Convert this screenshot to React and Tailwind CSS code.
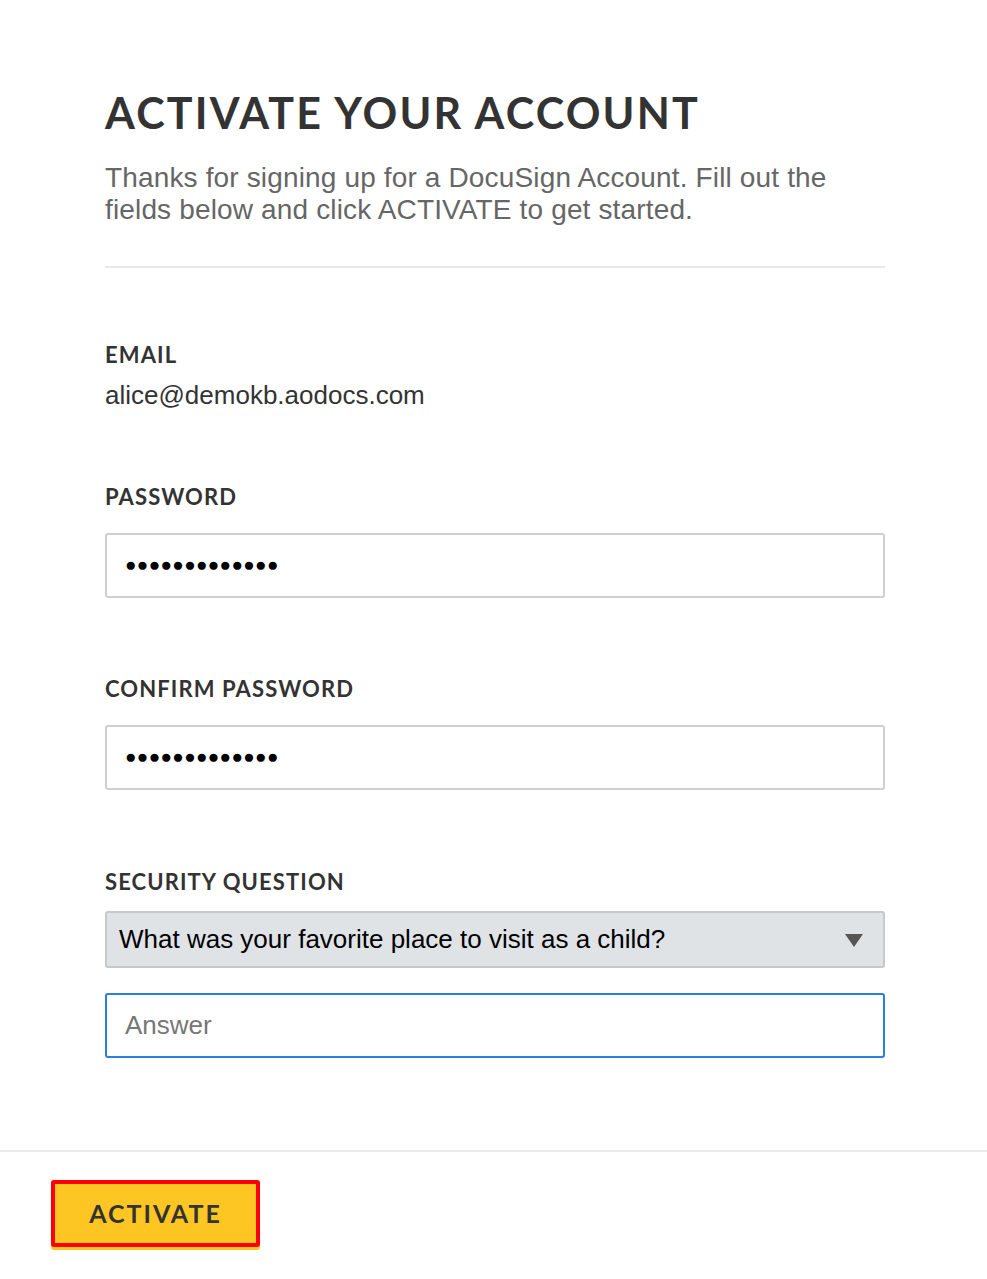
import { useState } from 'react'

const sans = { fontFamily: '"Liberation Sans", Arial, sans-serif' }

export default function App() {
  const [answer, setAnswer] = useState('')

  return (
    <div className="min-h-[1279px] w-[987px] bg-white flex flex-col" style={sans}>
      <div className="pl-[105px] pr-[102px] flex-1">
        <h1
          className="mt-[88px] text-[43px] leading-[50px] font-bold tracking-[2.2px] text-[#333]"
          style={{ fontFamily: 'Lato, "Open Sans", sans-serif' }}
        >
          ACTIVATE YOUR ACCOUNT
        </h1>
        <p className="mt-[24px] text-[28px] leading-[32px] tracking-[0.15px] text-[#666]">
          Thanks for signing up for a DocuSign Account. Fill out the fields below and click ACTIVATE to get started.
        </p>
        <div className="mt-[40px] h-[2px] bg-[#e8e8e8]" />

        <Label className="mt-[75px]">EMAIL</Label>
        <div className="mt-[13px] text-[26px] leading-[30px] text-[#333]">alice@demokb.aodocs.com</div>

        <Label className="mt-[75px]">PASSWORD</Label>
        <PasswordBox />

        <Label className="mt-[79px]">CONFIRM PASSWORD</Label>
        <PasswordBox />

        <Label className="mt-[80px]">SECURITY QUESTION</Label>
        <div className="mt-[17px] h-[57px] rounded-[3px] border-2 border-[#c6c8ca] bg-[#dfe3e6] flex items-center justify-between pl-[12px] pr-[20px]">
          <span className="text-[26px] text-black">What was your favorite place to visit as a child?</span>
          <svg width="18" height="14" viewBox="0 0 18 14">
            <path d="M0 1 L18 1 L9 14 Z" fill="#555" />
          </svg>
        </div>
        <input
          value={answer}
          onChange={(e) => setAnswer(e.target.value)}
          placeholder="Answer"
          className="mt-[25px] w-full h-[65px] rounded-[3px] border-2 border-[#2a7de1] px-[18px] text-[26px] text-black placeholder-[#777] outline-none"
        />
      </div>

      <div className="mt-[87px] h-[2px] bg-[#ebebeb]" />
      <div className="pl-[51px] pt-[28px] pb-[32px]">
        <button className="relative w-[209px] h-[67px] rounded-[3px] bg-[#fec622] shadow-[0_3px_0_#fec622] outline-4 -outline-offset-4 outline-[#ff0000] text-[25px] font-bold tracking-[2px] text-[#333]" style={{ fontFamily: 'Lato, sans-serif' }}>
          ACTIVATE
        </button>
      </div>
    </div>
  )
}

function Label({ className = '', children }) {
  return (
    <div
      className={`${className} text-[22px] leading-[24px] font-bold tracking-[1.1px] text-[#333]`}
      style={{ fontFamily: 'Lato, "Open Sans", sans-serif' }}
    >
      {children}
    </div>
  )
}

function PasswordBox() {
  return (
    <div className="mt-[24px] h-[65px] rounded-[3px] border-2 border-[#cfcfcf] flex items-center pl-[18px]">
      <span className="text-[19px] tracking-[0.35px] text-black">●●●●●●●●●●●●●</span>
    </div>
  )
}
